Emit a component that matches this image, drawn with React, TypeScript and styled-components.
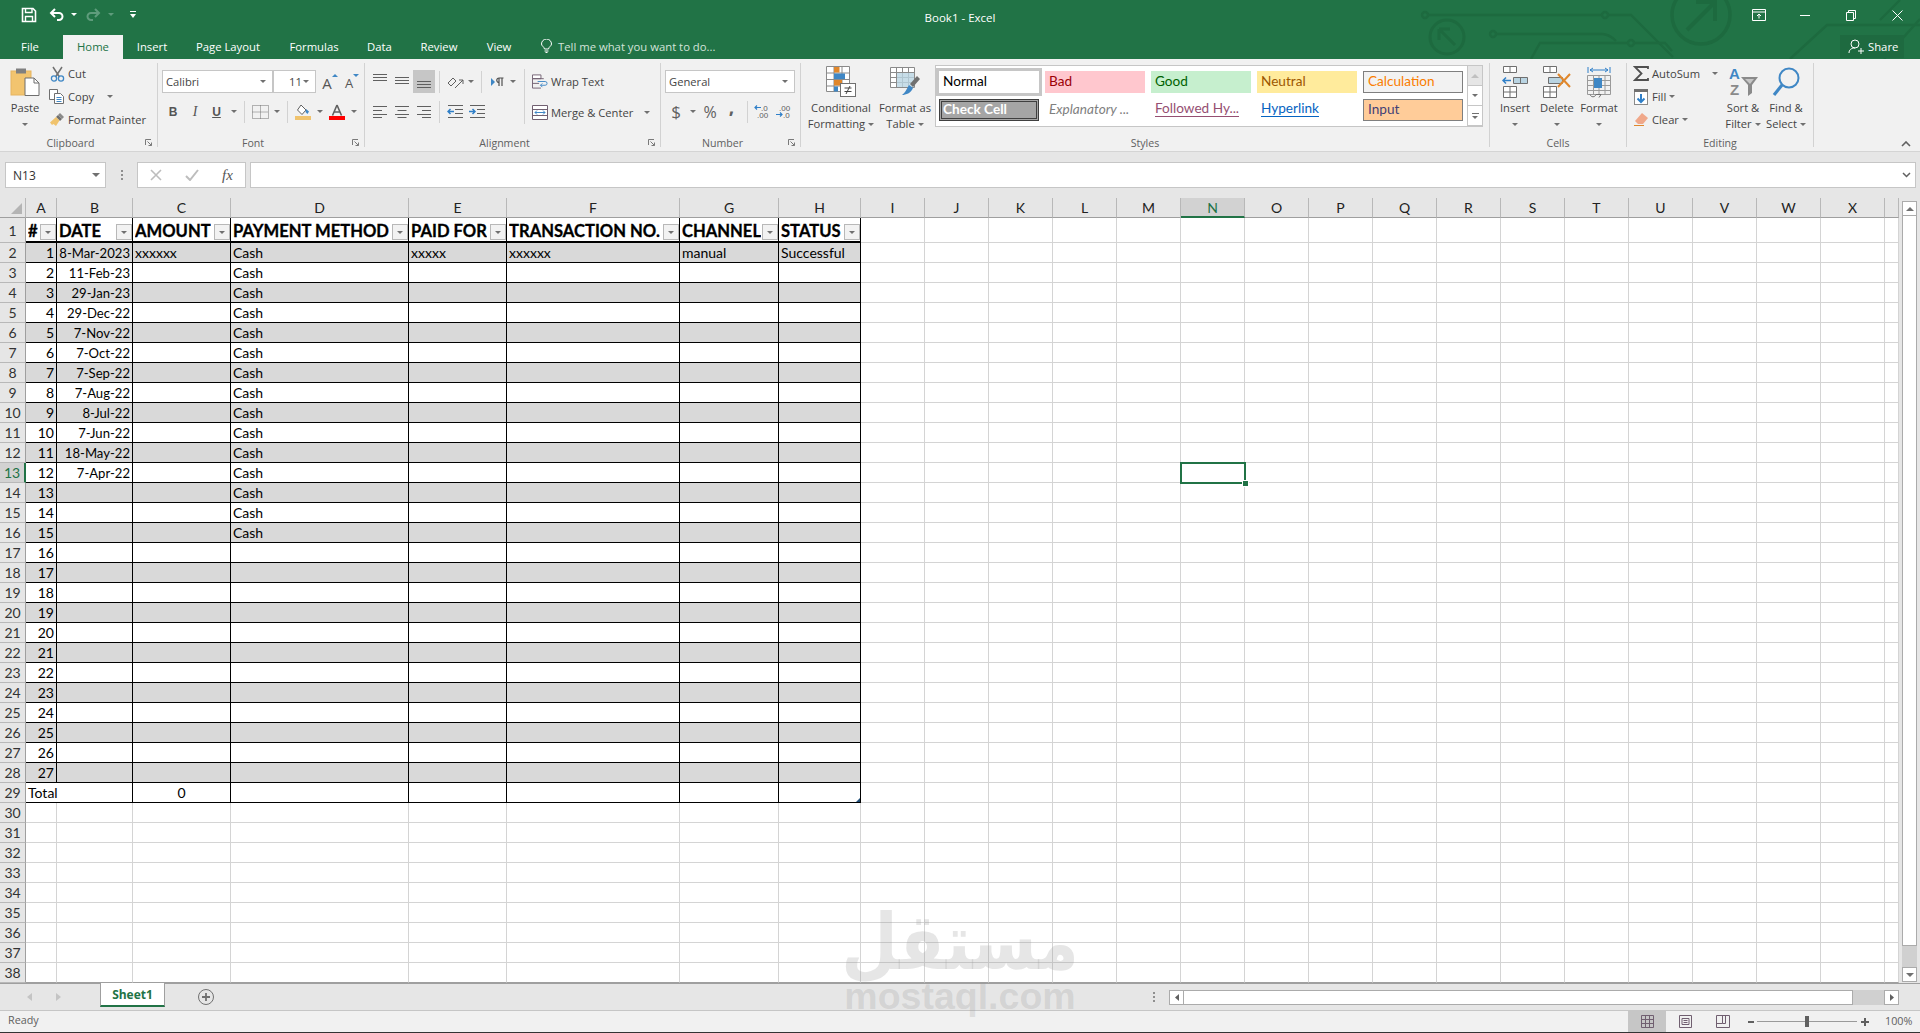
import React from "react";
import styled, { createGlobalStyle } from "styled-components";

const UI = `"Open Sans", "Liberation Sans", sans-serif`;
const SHEET = `Lato, "Liberation Sans", sans-serif`;
const GREEN = "#217346";
const DARK = "#444444";
const GRID = "#d4d4d4";

const GlobalStyle = createGlobalStyle`
  html, body {
    margin: 0;
    padding: 0;
    background: #e6e6e6;
    overflow: hidden;
  }
  * {
    box-sizing: border-box;
  }
`;

const COL_WIDTHS = [26, 31, 76, 98, 178, 98, 173, 99, 82, ...Array(16).fill(64), 14];
const LETTERS = "ABCDEFGHIJKLMNOPQRSTUVWX".split("");
const GRID_TEMPLATE = COL_WIDTHS.map((w) => `${w}px`).join(" ");
const DATES = ["8-Mar-2023", "11-Feb-23", "29-Jan-23", "29-Dec-22", "7-Nov-22", "7-Oct-22", "7-Sep-22", "7-Aug-22", "8-Jul-22", "7-Jun-22", "18-May-22", "7-Apr-22"];
const HEADERS = ["#", "DATE", "AMOUNT", "PAYMENT METHOD", "PAID FOR", "TRANSACTION NO.", "CHANNEL", "STATUS"];
const ROW_TWO: Record<number, string> = { 2: "xxxxxx", 4: "xxxxx", 5: "xxxxxx", 6: "manual", 7: "Successful" };

// ----- generic little bits -----

const Slot = styled.span<{ $w?: number; $ml?: number; $on?: boolean }>`
  display: flex;
  align-items: center;
  justify-content: center;
  flex: none;
  height: 23px;
  width: ${(p) => (p.$w ? `${p.$w}px` : "auto")};
  margin-left: ${(p) => p.$ml || 0}px;
  background: ${(p) => (p.$on ? "#c6c6c6" : "transparent")};
`;

const Caret = styled.span<{ $color?: string }>`
  display: inline-block;
  flex: none;
  width: 0;
  height: 0;
  border-left: 3px solid transparent;
  border-right: 3px solid transparent;
  border-top: 3px solid ${(p) => p.$color || "#707070"};
`;

const BigCaret = styled(Caret)`
  border-width: 4px 4px 0;
`;

const Divider = styled.span<{ $tall?: boolean; $ml?: number; $mr?: number }>`
  display: block;
  flex: none;
  width: 1px;
  height: ${(p) => (p.$tall ? 55 : 22)}px;
  margin: ${(p) => (p.$tall ? 6 : 1)}px ${(p) => p.$mr ?? 4}px 0 ${(p) => p.$ml ?? 4}px;
  background: #d2d2d2;
`;

const Grip = styled.span<{ $pushed?: boolean }>`
  display: flex;
  flex-direction: column;
  gap: 2px;
  flex: none;
  margin-left: ${(p) => (p.$pushed ? "auto" : "0")};
  i {
    display: block;
    width: 2px;
    height: 2px;
    background: #8f8f8f;
  }
`;

// ----- title bar -----

const TitleBar = styled.header`
  position: relative;
  height: 59px;
  background: ${GREEN};
  color: #fff;
  font-family: ${UI};
  overflow: hidden;
`;

const Circuit = styled.svg`
  position: absolute;
  left: 1400px;
  top: 0;
  pointer-events: none;
`;

const TopRow = styled.div`
  position: relative;
  display: grid;
  grid-template-columns: 1fr auto 1fr;
  align-items: center;
  height: 35px;
`;

const Qat = styled.div`
  display: flex;
  align-items: center;
  padding: 0 0 6px 14px;
`;

const WindowTitle = styled.div`
  font-size: 11.5px;
`;

const WindowButtons = styled.div`
  display: flex;
  justify-content: flex-end;
  align-items: center;
  padding-bottom: 5px;
`;

const WindowButton = styled.span`
  display: flex;
  justify-content: center;
  width: 46px;
`;

const TabRow = styled.nav`
  position: relative;
  display: flex;
  align-items: stretch;
  height: 24px;
  font-size: 11.3px;
`;

const Tab = styled.span<{ $w: number; $active?: boolean }>`
  display: flex;
  align-items: center;
  justify-content: center;
  width: ${(p) => p.$w}px;
  padding-bottom: 2px;
  background: ${(p) => (p.$active ? "#f1f1f1" : "transparent")};
  color: ${(p) => (p.$active ? GREEN : "#fff")};
`;

const FileTab = styled(Tab)`
  padding-right: 3px;
`;

const TellMe = styled.span`
  display: flex;
  align-items: center;
  gap: 6px;
  margin-left: 15px;
  padding-bottom: 2px;
  color: #d3e3da;
`;

const ShareBox = styled.span`
  display: flex;
  align-items: center;
  gap: 4px;
  width: 64px;
  height: 23px;
  margin-left: auto;
  margin-right: 16px;
  padding-left: 8px;
  background: #1e6a40;
`;

// ----- ribbon -----

const Ribbon = styled.section`
  display: flex;
  height: 93px;
  padding-top: 4px;
  background: #f1f1f1;
  border-bottom: 1px solid #d4d4d4;
  color: ${DARK};
  font-family: ${UI};
  font-size: 11.2px;
`;

const Group = styled.div<{ $w: number }>`
  display: flex;
  flex-direction: column;
  flex: none;
  width: ${(p) => p.$w}px;
  height: 84px;
  border-right: 1px solid #d2d2d2;
`;

const GroupBody = styled.div<{ $pl?: number }>`
  display: flex;
  flex: 1;
  padding-left: ${(p) => p.$pl ?? 4}px;
`;

const GroupFoot = styled.div`
  display: flex;
  align-items: center;
  height: 13px;
  color: #606060;
  font-size: 10.6px;
`;

const GroupLabel = styled.span`
  flex: 1;
  margin-top: 6px;
  text-align: center;
  line-height: 13px;
`;

const Launcher = styled.svg`
  flex: none;
  width: 7px;
  height: 7px;
  margin: 4px 5px 0 4px;
`;

const BigButton = styled.div<{ $w: number }>`
  display: flex;
  flex-direction: column;
  align-items: center;
  flex: none;
  width: ${(p) => p.$w}px;
  line-height: 16px;
  white-space: nowrap;
`;

const BigIcon = styled.div`
  display: flex;
  align-items: center;
  justify-content: center;
  height: 37px;
`;

const BigCaretLine = styled.div`
  display: flex;
  align-items: center;
  justify-content: center;
  gap: 3px;
  height: 16px;
`;

const StackCol = styled.div<{ $w?: number; $ml?: number }>`
  display: flex;
  flex-direction: column;
  flex: none;
  width: ${(p) => (p.$w ? `${p.$w}px` : "auto")};
  margin-top: -1px;
  margin-left: ${(p) => p.$ml || 0}px;
`;

const AlignStack = styled.div`
  display: flex;
  flex-direction: column;
  flex: none;
  padding-top: 3px;
`;

const SmallButton = styled.div`
  display: flex;
  align-items: center;
  gap: 3px;
  height: 23px;
  white-space: nowrap;
`;

const WideButton = styled(SmallButton)`
  height: 31px;
`;

const SmallIcon = styled.span`
  display: flex;
  align-items: center;
  justify-content: center;
  flex: none;
  width: 16px;
`;

const TwoRows = styled.div`
  display: flex;
  flex-direction: column;
  gap: 7px;
  padding-top: 7px;
`;

const ToolRow = styled.div`
  display: flex;
  align-items: center;
  height: 23px;
`;

const Combo = styled.div<{ $w: number; $ml?: number }>`
  display: flex;
  align-items: center;
  justify-content: space-between;
  flex: none;
  width: ${(p) => p.$w}px;
  height: 23px;
  margin-left: ${(p) => (p.$ml ? `${p.$ml}px` : "0")};
  padding: 0 6px 0 3px;
  background: #fff;
  border: 1px solid #c6c6c6;
`;

const ComboValue = styled.span`
  margin-left: 12px;
`;

const FontLetter = styled.span<{ $serif?: boolean; $u?: boolean; $size?: number }>`
  position: relative;
  font-family: ${(p) => (p.$serif ? `"Liberation Serif", serif` : `"Liberation Sans", sans-serif`)};
  font-size: ${(p) => p.$size || 12}px;
  font-weight: ${(p) => (p.$serif ? 400 : 700)};
  font-style: ${(p) => (p.$serif ? "italic" : "normal")};
  text-decoration: ${(p) => (p.$u ? "underline" : "none")};
  color: #555;
`;

const SizeLetter = styled.span<{ $down?: boolean }>`
  position: relative;
  font-size: ${(p) => (p.$down ? 13 : 15)}px;
  line-height: 18px;
  color: #555;
  padding-top: 2px;
  &::after {
    content: "";
    position: absolute;
    right: -6px;
    top: 2px;
    border-left: 3px solid transparent;
    border-right: 3px solid transparent;
    ${(p) => (p.$down ? "border-top" : "border-bottom")}: 3px solid #3f87c5;
  }
`;

const NumberSign = styled.span<{ $size?: number; $lift?: number; $bold?: boolean }>`
  font-size: ${(p) => p.$size || 15}px;
  font-weight: ${(p) => (p.$bold ? 800 : 400)};
  padding-bottom: ${(p) => p.$lift || 0}px;
  color: #606060;
`;

// ----- style gallery -----

const Gallery = styled.div`
  display: flex;
  flex: none;
  width: 548px;
  height: 62px;
  margin: 2px 0 0 2px;
  background: #fff;
  border: 1px solid #c6c6c6;
`;

const GalleryGrid = styled.div`
  display: grid;
  grid-template-columns: repeat(5, 100px);
  grid-auto-rows: 22px;
  gap: 6px;
  padding: 5px 0 0 3px;
  font-family: ${SHEET};
  font-size: 13.6px;
  color: #000;
`;

const StyleCell = styled.div<{ $bg?: string; $fg?: string; $border?: string; $italic?: boolean; $link?: boolean; $ring?: boolean; $double?: boolean }>`
  display: flex;
  align-items: center;
  padding: 0 0 2px 4px;
  background: ${(p) => p.$bg || "#fff"};
  color: ${(p) => p.$fg || "#000"};
  border: ${(p) => (p.$border ? `1px solid ${p.$border}` : "none")};
  font-style: ${(p) => (p.$italic ? "italic" : "normal")};
  font-weight: ${(p) => (p.$double ? 700 : 400)};
  outline: ${(p) => (p.$ring ? "3px solid #c6c6c6" : p.$double ? "1px solid #3f3f3f" : "none")};
  outline-offset: ${(p) => (p.$double ? "-1px" : "0")};
  box-shadow: ${(p) => (p.$double ? "inset 0 0 0 2px #a5a5a5, inset 0 0 0 3px #3f3f3f" : "none")};
  span {
    border-bottom: ${(p) => (p.$link ? `1px solid ${p.$fg}` : "none")};
    line-height: 15px;
  }
`;

const GalleryScroll = styled.div`
  display: flex;
  flex-direction: column;
  flex: none;
  width: 15px;
  margin-left: auto;
`;

const GalleryArrow = styled.span<{ $h: number; $off?: boolean }>`
  display: flex;
  flex-direction: column;
  align-items: center;
  justify-content: center;
  gap: 2px;
  height: ${(p) => p.$h}px;
  background: ${(p) => (p.$off ? "#e6e6e6" : "#fff")};
  border-left: 1px solid #c6c6c6;
  border-bottom: 1px solid #c6c6c6;
  i {
    display: block;
    width: 7px;
    height: 1px;
    background: #707070;
  }
`;

const ArrowUp = styled.span<{ $color?: string }>`
  width: 0;
  height: 0;
  border-left: 4px solid transparent;
  border-right: 4px solid transparent;
  border-bottom: 4px solid ${(p) => p.$color || "#707070"};
`;

const Collapse = styled.svg`
  align-self: flex-start;
  margin: 78px 0 0 87px;
`;

// ----- formula bar -----

const FormulaRow = styled.section`
  display: flex;
  height: 46px;
  padding: 10px 4px 10px 5px;
  background: #e6e6e6;
  font-family: ${UI};
`;

const NameBox = styled.div`
  display: flex;
  align-items: center;
  justify-content: space-between;
  width: 101px;
  padding: 0 5px 0 7px;
  background: #fff;
  border: 1px solid #c6c6c6;
  color: #333;
  font-size: 12px;
`;

const FormulaGrip = styled.div`
  display: flex;
  align-items: center;
  justify-content: center;
  width: 31px;
`;

const FormulaButtons = styled.div`
  display: flex;
  align-items: center;
  width: 109px;
  padding-left: 12px;
  background: #fff;
  border: 1px solid #c6c6c6;
`;

const CheckMark = styled.svg`
  margin-left: 23px;
`;

const FxLabel = styled.span`
  margin-left: 23px;
  font-family: "Liberation Serif", serif;
  font-style: italic;
  font-size: 15px;
  color: #555;
`;

const FormulaInput = styled.div`
  display: flex;
  align-items: center;
  justify-content: flex-end;
  flex: 1;
  margin-left: 4px;
  padding-right: 4px;
  background: #fff;
  border: 1px solid #c6c6c6;
`;

// ----- sheet -----

const SheetArea = styled.section`
  display: flex;
  height: 785px;
  background: #e6e6e6;
  font-family: ${SHEET};
  font-size: 14px;
`;

const SheetGrid = styled.div`
  flex: none;
  width: 1899px;
  background: #fff;
`;

const Row = styled.div<{ $h: number }>`
  display: grid;
  grid-template-columns: ${GRID_TEMPLATE};
  height: ${(p) => p.$h}px;
`;

const Corner = styled.div`
  display: flex;
  align-items: flex-end;
  justify-content: flex-end;
  padding: 0 3px 3px 0;
  background: #e6e6e6;
  border-right: 1px solid #b8b8b8;
  border-bottom: 1px solid #9f9f9f;
`;

const ColHead = styled.div<{ $on?: boolean }>`
  display: flex;
  align-items: center;
  justify-content: center;
  background: ${(p) => (p.$on ? "#d2d2d2" : "#e6e6e6")};
  color: ${(p) => (p.$on ? GREEN : "#222")};
  border-right: 1px solid #b8b8b8;
  border-bottom: ${(p) => (p.$on ? `2px solid ${GREEN}` : "1px solid #9f9f9f")};
`;

const RowHead = styled.div<{ $on?: boolean }>`
  display: flex;
  align-items: center;
  justify-content: center;
  background: ${(p) => (p.$on ? "#d2d2d2" : "#e6e6e6")};
  color: ${(p) => (p.$on ? GREEN : "#333")};
  border-right: ${(p) => (p.$on ? `2px solid ${GREEN}` : "1px solid #9f9f9f")};
  border-bottom: 1px solid #b8b8b8;
`;

const Cell = styled.div<{ $table?: boolean; $fill?: boolean; $align?: string; $span?: number; $end?: boolean; $num?: boolean }>`
  position: relative;
  display: flex;
  align-items: center;
  justify-content: ${(p) => p.$align || "flex-start"};
  grid-column: span ${(p) => p.$span || 1};
  padding: 0 2px;
  overflow: hidden;
  white-space: nowrap;
  font-size: ${(p) => (p.$num ? 13.1 : 14)}px;
  background: ${(p) => (p.$fill ? "#d9d9d9" : "#fff")};
  color: #000;
  border-right: 1px solid ${(p) => (p.$table ? "#000" : GRID)};
  border-bottom: 1px solid ${(p) => (p.$table ? "#000" : p.$end ? "#9f9f9f" : GRID)};
`;

const HeaderCell = styled(Cell)`
  padding-top: 3px;
  font-size: 16.6px;
  font-weight: 700;
  -webkit-text-stroke: 0.3px #000;
  border-bottom: 2px solid #000;
  overflow: visible;
`;

const HeaderText = styled.span`
  overflow: hidden;
  line-height: 20px;
`;

const FilterButton = styled.span`
  position: absolute;
  right: 0;
  bottom: 1px;
  display: flex;
  align-items: center;
  justify-content: center;
  width: 16px;
  height: 16px;
  background: #f2f2f2;
  border: 1px solid #b8b8b8;
`;

const Selected = styled.span`
  position: absolute;
  left: -1px;
  top: -1px;
  z-index: 2;
  width: 66px;
  height: 22px;
  border: 2px solid ${GREEN};
  &::after {
    content: "";
    position: absolute;
    right: -4px;
    bottom: -4px;
    width: 5px;
    height: 5px;
    background: ${GREEN};
    outline: 1px solid #fff;
  }
`;

const SelectedHolder = styled(Cell)`
  overflow: visible;
`;

const ResizeMark = styled.span`
  position: absolute;
  right: 0;
  bottom: 0;
  width: 0;
  height: 0;
  border-left: 4px solid transparent;
  border-bottom: 4px solid #1f4e79;
`;

const VScroll = styled.div`
  display: flex;
  flex-direction: column;
  flex: none;
  width: 15px;
  height: 784px;
  margin-left: 3px;
  padding-top: 3px;
`;

const ScrollButton = styled.span<{ $w?: number }>`
  display: flex;
  align-items: center;
  justify-content: center;
  flex: none;
  width: ${(p) => (p.$w ? `${p.$w}px` : "auto")};
  height: 15px;
  background: #fff;
  border: 1px solid #ababab;
`;

const ScrollThumb = styled.span`
  display: block;
  flex: 1;
  background: #fff;
  border: 1px solid #ababab;
  border-top: none;
`;

const ScrollTrack = styled.span<{ $size: number; $horizontal?: boolean }>`
  display: block;
  flex: none;
  ${(p) => (p.$horizontal ? "width" : "height")}: ${(p) => p.$size}px;
  background: #d0d0d0;
`;

// ----- sheet tabs and status -----

const TabsBar = styled.section`
  display: flex;
  align-items: center;
  height: 28px;
  background: #e6e6e6;
  border-top: 1px solid #9f9f9f;
  border-bottom: 1px solid #c6c6c6;
  font-family: ${UI};
`;

const SheetNav = styled.span<{ $w: number; $ml?: number }>`
  display: flex;
  justify-content: center;
  width: ${(p) => p.$w}px;
  margin-left: ${(p) => p.$ml || 0}px;
`;

const SheetTab = styled.span`
  display: flex;
  align-items: center;
  justify-content: center;
  align-self: flex-start;
  width: 65px;
  height: 24px;
  margin: -1px 0 0 28px;
  padding-top: 1px;
  background: #fff;
  color: ${GREEN};
  font-size: 12px;
  font-weight: 700;
  border-left: 1px solid #9f9f9f;
  border-right: 1px solid #9f9f9f;
  border-bottom: 2px solid ${GREEN};
`;

const AddSheet = styled.svg`
  margin-left: 33px;
`;

const HScroll = styled.div`
  display: flex;
  flex: none;
  width: 730px;
  height: 15px;
  margin: 0 21px 0 14px;
`;

const HThumb = styled.span`
  display: block;
  flex: 1;
  background: #fff;
  border: 1px solid #ababab;
  border-left: none;
`;

const StatusBar = styled.footer`
  display: flex;
  align-items: center;
  height: 22px;
  padding-left: 8px;
  background: #f1f1f1;
  border-bottom: 1px solid #333;
  color: #606060;
  font-family: ${UI};
  font-size: 10.8px;
`;

const ReadyText = styled.span`
  padding-bottom: 5px;
`;

const ViewButton = styled.span<{ $on?: boolean; $first?: boolean }>`
  display: flex;
  align-items: center;
  justify-content: center;
  align-self: stretch;
  width: 38px;
  padding-bottom: 1px;
  margin-left: ${(p) => (p.$first ? "auto" : "0")};
  background: ${(p) => (p.$on ? "#c6c6c6" : "transparent")};
`;

const ZoomSlider = styled.span`
  position: relative;
  display: block;
  width: 100px;
  height: 1px;
  margin-right: 3px;
  background: #9a9a9a;
  i {
    position: absolute;
    left: 48px;
    top: -5px;
    width: 4px;
    height: 11px;
    background: #606060;
  }
`;

const ZoomPct = styled.span`
  width: 50px;
  padding-left: 15px;
  padding-bottom: 3px;
`;

const Watermark = styled.div`
  position: absolute;
  left: 830px;
  top: 910px;
  width: 260px;
  display: flex;
  flex-direction: column;
  align-items: center;
  color: rgba(150, 150, 150, 0.24);
  pointer-events: none;
  z-index: 5;
`;

const WatermarkArabic = styled.span`
  font-family: "DejaVu Sans", sans-serif;
  font-weight: 700;
  font-size: 65px;
  line-height: 66px;
  transform: scaleY(1.2);
`;

const WatermarkLatin = styled.span`
  font-family: "Liberation Sans", sans-serif;
  font-weight: 700;
  font-size: 37.5px;
  line-height: 26px;
  margin-top: 7px;
`;

// ----- icons -----

const SaveIcon = () => (
  <svg width="16" height="16" viewBox="0 0 16 16" fill="none" stroke="#fff" strokeWidth="1.6">
    <path d="M1.5 1.5h10.500l2.500 2.500v10.500h-13z" />
    <path d="M4.500 1.500v4h6.500v-4M4.500 14.500v-5h7v5" strokeWidth="1.4" />
  </svg>
);

const UndoIcon = ({ color = "#fff" }: { color?: string }) => (
  <svg width="16" height="14" viewBox="0 0 16 14" fill="none" stroke={color} strokeWidth="2">
    <path d="M6 1L2 5l4 4M2 5h8a3.500 3.500 0 0 1 0 7H8" />
  </svg>
);

const RedoIcon = ({ color }: { color: string }) => (
  <svg width="16" height="14" viewBox="0 0 16 14" fill="none" stroke={color} strokeWidth="2">
    <path d="M10 1l4 4-4 4M14 5H6a3.500 3.500 0 0 0 0 7h2" />
  </svg>
);

const PasteIcon = () => (
  <svg width="30" height="29" viewBox="0 0 30 29">
    <rect x="1" y="4" width="20" height="24" fill="#f2c46f" stroke="#e6b461" />
    <rect x="6" y="1.500" width="10" height="5" fill="#808080" />
    <path d="M15 11h9l5 5v12.500H15z" fill="#fff" stroke="#6f6f6f" />
    <path d="M24 11v5h5" fill="none" stroke="#6f6f6f" />
  </svg>
);

const CutIcon = () => (
  <svg width="15" height="16" viewBox="0 0 15 16" fill="none">
    <path d="M3 1l6.500 10M12 1L5.500 11" stroke="#707070" strokeWidth="1.500" />
    <circle cx="4" cy="12.500" r="2.600" stroke="#3f87c5" strokeWidth="1.300" />
    <circle cx="11" cy="12.500" r="2.600" stroke="#3f87c5" strokeWidth="1.300" />
  </svg>
);

const CopyIcon = () => (
  <svg width="16" height="15" viewBox="0 0 16 15" fill="#fff" stroke="#6f6f6f">
    <path d="M.5.5h8v10h-8z" />
    <path d="M5.500 4.500h6l3 3v7h-9z" />
    <path d="M7.500 8.500h5M7.500 10.500h5M7.500 12.500h5" stroke="#3f87c5" />
  </svg>
);

const BrushIcon = () => (
  <svg width="16" height="15" viewBox="0 0 16 15">
    <path d="M9 3l4 4-2 2-4-4z" fill="#6f6f6f" />
    <path d="M11 1l4 4-2 2-4-4z" fill="#8a8a8a" />
    <path d="M7 5l3.500 3.500L7 14 4.500 12 3 13 1 10.500z" fill="#f0c36d" />
  </svg>
);

const AlignVLines = styled.svg<{ $y: number }>`
  margin-top: ${(p) => p.$y}px;
`;

const AlignV = ({ y }: { y: number }) => (
  <AlignVLines $y={y} width="14" height="8" viewBox="0 0 14 8" stroke="#606060">
    <path d="M0 .5h14M0 3.500h14M0 6.500h14" />
  </AlignVLines>
);

const AlignH = ({ kind }: { kind: "l" | "c" | "r" }) => {
  const short = kind === "l" ? "M0 4.500h9" : kind === "c" ? "M2.500 4.500h9" : "M5 4.500h9";
  const shortB = kind === "l" ? "M0 11.500h9" : kind === "c" ? "M2.500 11.500h9" : "M5 11.500h9";
  return (
    <svg width="14" height="12" viewBox="0 0 14 12" stroke="#606060">
      <path d={`M0 .5h14M0 8.500h14 ${short} ${shortB}`} />
    </svg>
  );
};

const BorderIcon = () => (
  <svg width="17" height="14" viewBox="0 0 17 14" fill="none" stroke="#707070" strokeDasharray="1 1">
    <path d="M.5.5h16v13H.5zM8.500 .5v13M.5 7h16" />
  </svg>
);

const FillIcon = () => (
  <svg width="16" height="16" viewBox="0 0 16 16">
    <path d="M6 1l5 5-4 4.500L2.500 6z" fill="#fff" stroke="#606060" />
    <path d="M11 5l3 2.500-1.500 2.500L10.500 8z" fill="#3f87c5" />
    <rect x="0" y="12" width="16" height="4" fill="#f0c36d" />
  </svg>
);

const FontColorIcon = () => (
  <svg width="16" height="16" viewBox="0 0 16 16">
    <path d="M8 1L3.500 11.500M8 1l4.500 10.500M5 8h6" stroke="#606060" strokeWidth="1.600" fill="none" />
    <rect x="0" y="12" width="16" height="4" fill="#ff0000" />
  </svg>
);

const OrientIcon = () => (
  <svg width="17" height="15" viewBox="0 0 17 15" fill="none" stroke="#606060">
    <path d="M1 9l5-5 3 3-5 5zM1 9l3 3" />
    <path d="M8 14l8-8M16 6v4M16 6h-4" stroke="#606060" />
  </svg>
);

const ParaIcon = () => (
  <svg width="13" height="10" viewBox="0 0 13 10">
    <path d="M0 1l4 4-4 4z" fill="#3f87c5" />
    <path d="M7.500 1h5M8 1v8M11 1v8M8 1a2 2 0 0 0 0 4.500" fill="none" stroke="#505050" strokeWidth="1.200" />
  </svg>
);

const IndentIcon = ({ out = false }: { out?: boolean }) => (
  <svg width="16" height="13" viewBox="0 0 16 13" fill="none" stroke="#606060">
    <path d="M1 .5h15M8 4.500h8M8 8.500h8M1 12.500h15" />
    <path d={out ? "M7 6.500H1M3.500 4L1 6.500 3.500 9" : "M0 6.500h6M3.500 4L6 6.500 3.500 9"} stroke="#2f7fc8" strokeWidth="1.500" />
  </svg>
);

const WrapIcon = () => (
  <svg width="17" height="15" viewBox="0 0 17 15" fill="#fff" stroke="#705f70">
    <path d="M.5.5h9v4h-9zM.5 4.500h12M.5 9.500h7M.5 14.500h9M.5 4.500v10" />
    <path d="M6 7.500h8a2 2 0 0 1 0 4H9M11 9.500l-2 2 2 2" fill="none" stroke="#3f87c5" />
  </svg>
);

const MergeIcon = () => (
  <svg width="16" height="15" viewBox="0 0 16 15" fill="#fff" stroke="#705f70">
    <path d="M.5.5h15v14H.5zM.5 4.500h15M.5 10.500h15" />
    <path d="M3 7.500h10M5 5.500l-2 2 2 2M11 5.500l2 2-2 2" fill="none" stroke="#3f87c5" />
  </svg>
);

const DecimalIcon = ({ more = false }: { more?: boolean }) => (
  <svg width="17" height="15" viewBox="0 0 17 15" fill="#606060" fontFamily="Liberation Sans" fontSize="8">
    <text x={more ? 3 : 7} y="6.500">{more ? ".00" : ".0"}</text>
    <text x={more ? 7 : 3} y="14">{more ? ".0" : ".00"}</text>
    <path
      d={more ? "M0 10.500h6M4 8.500l2 2-2 2" : "M7 3.500H1M3 1.500l-2 2 2 2"}
      fill="none"
      stroke="#2f7fc8"
      strokeWidth="1.200"
    />
  </svg>
);

const CondIcon = () => (
  <svg width="30" height="31" viewBox="0 0 30 31">
    <path d="M.5.5h23v25H.5zM8 .5v25M16 .5v25M.5 7h23M.5 13.500h23M.5 20h23" fill="#fff" stroke="#8a8a8a" />
    <rect x="8" y="1" width="5.500" height="5.500" fill="#e0872c" />
    <rect x="8" y="7.500" width="11" height="5.500" fill="#3f87c5" />
    <rect x="8" y="14" width="8" height="5.500" fill="#e0872c" />
    <rect x="8" y="20.500" width="4" height="5" fill="#3f87c5" />
    <rect x="14.500" y="17.500" width="15" height="13" fill="#fff" stroke="#707070" />
    <path d="M18.500 22h7M18.500 25.500h7M24 20l-4 8" stroke="#444" fill="none" />
  </svg>
);

const TableIcon = () => (
  <svg width="30" height="30" viewBox="0 0 30 30">
    <path d="M.5.5h24v20H.5zM6.500 .5v20M12.500 .5v20M18.500 .5v20M.5 5.500h24M.5 10.500h24M.5 15.500h24" fill="#fff" stroke="#8a8a8a" />
    <rect x="7" y="6" width="17" height="14" fill="#b9d4e2" opacity=".8" />
    <path d="M27 9l3 3-7 8-3-3z" fill="#707070" />
    <path d="M19 18l4 3c-2 5-7 7-11 7 3-2 4-5 7-10z" fill="#3f87c5" />
  </svg>
);

const InsertIcon = () => (
  <svg width="27" height="32" viewBox="0 0 27 32" fill="#fff" stroke="#6f6f6f">
    <path d="M1.500 .5h13v6h-13zM8 .5v6" />
    <path d="M11.500 11.500h14v6h-14z" fill="#b9d4e2" />
    <path d="M18.500 11.500v6" />
    <path d="M9 14.500H1M4 11.500l-3 3 3 3" fill="none" stroke="#2f7fc8" strokeWidth="1.500" />
    <path d="M1.500 20.500h13v11h-13zM8 20.500v11M1.500 26h13" />
  </svg>
);

const DeleteIcon = () => (
  <svg width="30" height="32" viewBox="0 0 30 32" fill="#fff" stroke="#6f6f6f">
    <path d="M1.500 .5h13v6h-13zM8 .5v6" />
    <path d="M6.500 11.500h14v6h-14z" fill="#b9d4e2" />
    <path d="M1.500 20.500h13v11h-13zM8 20.500v11M1.500 26h13" />
    <path d="M16 8l12 13M28 8L16 21" stroke="#e0872c" strokeWidth="2" fill="none" />
  </svg>
);

const FormatIcon = () => (
  <svg width="24" height="33" viewBox="0 0 24 33" fill="none" stroke="#6f6f6f">
    <path d="M1 2v6M23 2v6M3 5h18M3 5l3-2M3 5l3 2M21 5l-3-2M21 5l-3 2" stroke="#2f7fc8" />
    <path d="M.5 10.500h23v19H.5zM6.500 10.500v19M12 10.500v19M18 10.500v19M.5 15.500h23M.5 20.500h23M.5 25.500h23" stroke="#9a9a9a" />
    <rect x="7" y="13" width="8" height="10" fill="#3f87c5" stroke="none" />
    <path d="M3 29.500c1 3 5 3 6 0h5l-2 3" stroke="#6f6f6f" />
  </svg>
);

const SigmaIcon = () => (
  <svg width="16" height="15" viewBox="0 0 16 15" fill="none" stroke="#505050" strokeWidth="1.800">
    <path d="M15 3V1H2l6.500 6.500L2 14h13v-2" />
  </svg>
);

const FillDownIcon = () => (
  <svg width="14" height="16" viewBox="0 0 14 16">
    <rect x=".5" y=".5" width="13" height="15" fill="#fff" stroke="#8a8a8a" />
    <rect x="0" y="0" width="14" height="3" fill="#707070" />
    <path d="M7 5v8M3.500 9.500L7 13l3.500-3.500" fill="none" stroke="#2f7fc8" strokeWidth="2" />
  </svg>
);

const EraserIcon = () => (
  <svg width="14" height="13" viewBox="0 0 14 13">
    <path d="M8 0l6 5-5 6H4L1 8z" fill="#f0a88a" />
    <path d="M0 12.500h10" stroke="#e0872c" />
  </svg>
);

const SortIcon = () => (
  <svg width="29" height="31" viewBox="0 0 29 31" fontFamily="Liberation Sans" fontWeight="700" fontSize="15">
    <text x="0" y="13" fill="#3f87c5">A</text>
    <text x="1" y="29" fill="#8a8a8a">Z</text>
    <path d="M12 11h17l-6 8v8l-4 3V19z" fill="#8a8a8a" />
    <path d="M16 13h9l-4 5z" fill="#c6c6c6" />
  </svg>
);

const FindIcon = () => (
  <svg width="28" height="30" viewBox="0 0 28 30" fill="none">
    <circle cx="17" cy="11" r="9.500" stroke="#3f87c5" strokeWidth="2" />
    <path d="M10 18L2 28" stroke="#3f87c5" strokeWidth="3.200" />
  </svg>
);

const LauncherIcon = () => (
  <Launcher viewBox="0 0 7 7" fill="none" stroke="#7a7a7a">
    <path d="M.5 6V.5H6" />
    <path d="M2.500 2.500l4 4M6.500 3.500v3h-3" />
  </Launcher>
);

const Foot = ({ label, launcher = false }: { label: string; launcher?: boolean }) => (
  <GroupFoot>
    <GroupLabel>{label}</GroupLabel>
    {launcher && <LauncherIcon />}
  </GroupFoot>
);

const StyleGallery = () => (
  <Gallery>
    <GalleryGrid>
      <StyleCell $ring>Normal</StyleCell>
      <StyleCell $bg="#ffc7ce" $fg="#9c0006">Bad</StyleCell>
      <StyleCell $bg="#c6efce" $fg="#006100">Good</StyleCell>
      <StyleCell $bg="#ffeb9c" $fg="#9c5700">Neutral</StyleCell>
      <StyleCell $bg="#f2f2f2" $fg="#fa7d00" $border="#7f7f7f">Calculation</StyleCell>
      <StyleCell $bg="#a5a5a5" $fg="#fff" $double>Check Cell</StyleCell>
      <StyleCell $fg="#7f7f7f" $italic>Explanatory ...</StyleCell>
      <StyleCell $fg="#954f72" $link><span>Followed Hy...</span></StyleCell>
      <StyleCell $fg="#0563c1" $link><span>Hyperlink</span></StyleCell>
      <StyleCell $bg="#ffcc99" $fg="#3f3f76" $border="#7f7f7f">Input</StyleCell>
    </GalleryGrid>
    <GalleryScroll>
      <GalleryArrow $h={20} $off><ArrowUp $color="#c0c0c0" /></GalleryArrow>
      <GalleryArrow $h={20}><Caret /></GalleryArrow>
      <GalleryArrow $h={20}><i /><Caret /></GalleryArrow>
    </GalleryScroll>
  </Gallery>
);

const RibbonBar = () => (
  <Ribbon>
    <Group $w={158}>
      <GroupBody $pl={8}>
        <BigButton $w={34}>
          <BigIcon><PasteIcon /></BigIcon>
          <div>Paste</div>
          <BigCaretLine><Caret /></BigCaretLine>
        </BigButton>
        <StackCol $ml={7}>
          <SmallButton><SmallIcon><CutIcon /></SmallIcon>Cut</SmallButton>
          <SmallButton><SmallIcon><CopyIcon /></SmallIcon>Copy<Slot $w={18} $ml={4}><Caret /></Slot></SmallButton>
          <SmallButton><SmallIcon><BrushIcon /></SmallIcon>Format Painter</SmallButton>
        </StackCol>
      </GroupBody>
      <Foot label="Clipboard" launcher />
    </Group>

    <Group $w={207}>
      <GroupBody>
        <TwoRows>
          <ToolRow>
            <Combo $w={111}>Calibri<Caret /></Combo>
            <Combo $w={43}><ComboValue>11</ComboValue><Caret /></Combo>
            <Slot $w={22}><SizeLetter>A</SizeLetter></Slot>
            <Slot $w={22}><SizeLetter $down>A</SizeLetter></Slot>
          </ToolRow>
          <ToolRow>
            <Slot $w={22}><FontLetter>B</FontLetter></Slot>
            <Slot $w={22}><FontLetter $serif $size={14}>I</FontLetter></Slot>
            <Slot $w={21}><FontLetter $u>U</FontLetter></Slot>
            <Slot $w={13}><Caret /></Slot>
            <Divider />
            <Slot $w={23}><BorderIcon /></Slot>
            <Slot $w={10}><Caret /></Slot>
            <Divider $ml={5} $mr={3} />
            <Slot $w={24}><FillIcon /></Slot>
            <Slot $w={10}><Caret /></Slot>
            <Slot $w={24}><FontColorIcon /></Slot>
            <Slot $w={9}><Caret /></Slot>
          </ToolRow>
        </TwoRows>
      </GroupBody>
      <Foot label="Font" launcher />
    </Group>

    <Group $w={296}>
      <GroupBody>
        <TwoRows>
          <ToolRow>
            <Slot $w={22}><AlignV y={-8} /></Slot>
            <Slot $w={22}><AlignV y={-1} /></Slot>
            <Slot $w={22} $on><AlignV y={7} /></Slot>
            <Divider />
            <Slot $w={22}><OrientIcon /></Slot>
            <Slot $w={10}><Caret /></Slot>
            <Divider $ml={5} />
            <Slot $w={22}><ParaIcon /></Slot>
            <Slot $w={10}><Caret /></Slot>
          </ToolRow>
          <ToolRow>
            <Slot $w={22}><AlignH kind="l" /></Slot>
            <Slot $w={22}><AlignH kind="c" /></Slot>
            <Slot $w={22}><AlignH kind="r" /></Slot>
            <Divider />
            <Slot $w={22}><IndentIcon out /></Slot>
            <Slot $w={22}><IndentIcon /></Slot>
          </ToolRow>
        </TwoRows>
        <Divider $tall $ml={6} $mr={7} />
        <AlignStack>
          <WideButton><SmallIcon><WrapIcon /></SmallIcon>Wrap Text</WideButton>
          <WideButton><SmallIcon><MergeIcon /></SmallIcon>Merge &amp; Center<Slot $w={10} $ml={6}><Caret /></Slot></WideButton>
        </AlignStack>
      </GroupBody>
      <Foot label="Alignment" launcher />
    </Group>

    <Group $w={140}>
      <GroupBody>
        <TwoRows>
          <ToolRow><Combo $w={130}>General<Caret /></Combo></ToolRow>
          <ToolRow>
            <Slot $w={22}><NumberSign $size={17}>$</NumberSign></Slot>
            <Slot $w={11}><Caret /></Slot>
            <Slot $w={24}><NumberSign $size={16}>%</NumberSign></Slot>
            <Slot $w={19}><NumberSign $size={16} $lift={8} $bold>,</NumberSign></Slot>
            <Divider $ml={6} $mr={3} />
            <Slot $w={22}><DecimalIcon /></Slot>
            <Slot $w={22}><DecimalIcon more /></Slot>
          </ToolRow>
        </TwoRows>
      </GroupBody>
      <Foot label="Number" launcher />
    </Group>

    <Group $w={689}>
      <GroupBody>
        <BigButton $w={72}>
          <BigIcon><CondIcon /></BigIcon>
          <div>Conditional</div>
          <BigCaretLine>Formatting<Caret /></BigCaretLine>
        </BigButton>
        <BigButton $w={56}>
          <BigIcon><TableIcon /></BigIcon>
          <div>Format as</div>
          <BigCaretLine>Table<Caret /></BigCaretLine>
        </BigButton>
        <StyleGallery />
      </GroupBody>
      <Foot label="Styles" />
    </Group>

    <Group $w={137}>
      <GroupBody>
        <BigButton $w={42}>
          <BigIcon><InsertIcon /></BigIcon>
          <div>Insert</div>
          <BigCaretLine><Caret /></BigCaretLine>
        </BigButton>
        <BigButton $w={42}>
          <BigIcon><DeleteIcon /></BigIcon>
          <div>Delete</div>
          <BigCaretLine><Caret /></BigCaretLine>
        </BigButton>
        <BigButton $w={42}>
          <BigIcon><FormatIcon /></BigIcon>
          <div>Format</div>
          <BigCaretLine><Caret /></BigCaretLine>
        </BigButton>
      </GroupBody>
      <Foot label="Cells" />
    </Group>

    <Group $w={187}>
      <GroupBody $pl={6}>
        <StackCol $w={87}>
          <SmallButton><SmallIcon><SigmaIcon /></SmallIcon>AutoSum<Slot $w={10} $ml={7}><Caret /></Slot></SmallButton>
          <SmallButton><SmallIcon><FillDownIcon /></SmallIcon>Fill<Caret /></SmallButton>
          <SmallButton><SmallIcon><EraserIcon /></SmallIcon>Clear<Caret /></SmallButton>
        </StackCol>
        <BigButton $w={46}>
          <BigIcon><SortIcon /></BigIcon>
          <div>Sort &amp;</div>
          <BigCaretLine>Filter<Caret /></BigCaretLine>
        </BigButton>
        <BigButton $w={40}>
          <BigIcon><FindIcon /></BigIcon>
          <div>Find &amp;</div>
          <BigCaretLine>Select<Caret /></BigCaretLine>
        </BigButton>
      </GroupBody>
      <Foot label="Editing" />
    </Group>

    <Collapse width="10" height="6" viewBox="0 0 10 6" fill="none" stroke="#606060" strokeWidth="1.600">
      <path d="M1 5l4-4 4 4" />
    </Collapse>
  </Ribbon>
);

const Title = () => (
  <TitleBar>
    <Circuit width="520" height="59" viewBox="0 0 520 59" fill="none" stroke="#1d6a3f" strokeWidth="2.400">
      <circle cx="25" cy="15" r="3" />
      <path d="M28 15h174M208 15h23l42 42" />
      <circle cx="205" cy="15" r="3" />
      <circle cx="47" cy="37" r="17" strokeWidth="3" />
      <path d="M39 29l16 16M39 29v11M39 29h11" strokeWidth="3" />
      <circle cx="93" cy="34" r="3" />
      <path d="M96 34h106c6 0 10 3 14 7" />
      <path d="M131 59l9-16h88M234 43h31l7 8" />
      <circle cx="231" cy="43" r="3" />
      <circle cx="301" cy="15" r="29" strokeWidth="3.500" />
      <path d="M287 30l28-28M296 2h19v19" strokeWidth="4" />
      <path d="M390 59l37-34h93M484 59l36-40M500 0l-20 20" />
    </Circuit>
    <TopRow>
      <Qat>
        <Slot $w={30}><SaveIcon /></Slot>
        <Slot $w={26}><UndoIcon /></Slot>
        <Slot $w={7}><Caret $color="#fff" /></Slot>
        <Slot $w={28} $ml={2}><RedoIcon color="#5f9c7c" /></Slot>
        <Slot $w={7}><Caret $color="#5f9c7c" /></Slot>
        <Slot $w={18} $ml={10}>
          <svg width="6" height="7" viewBox="0 0 6 7" fill="#fff"><path d="M0 0h6v1H0zM0 3h6L3 7z" /></svg>
        </Slot>
      </Qat>
      <WindowTitle>Book1 - Excel</WindowTitle>
      <WindowButtons>
        <WindowButton>
          <svg width="14" height="12" viewBox="0 0 14 12" fill="none" stroke="#fff">
            <path d="M.5.5h13v11H.5zM.5 3h13M7 9.500V5M5 7l2-2 2 2" />
          </svg>
        </WindowButton>
        <WindowButton>
          <svg width="10" height="10" viewBox="0 0 10 10" stroke="#fff"><path d="M0 5.500h10" /></svg>
        </WindowButton>
        <WindowButton>
          <svg width="10" height="11" viewBox="0 0 10 11" fill="none" stroke="#fff">
            <path d="M.5 2.500h7v8h-7zM2.500 2.500v-2h7v8h-2" />
          </svg>
        </WindowButton>
        <WindowButton>
          <svg width="11" height="11" viewBox="0 0 11 11" stroke="#fff"><path d="M.5.5l10 10M10.500 .5l-10 10" /></svg>
        </WindowButton>
      </WindowButtons>
    </TopRow>
    <TabRow>
      <FileTab $w={63}>File</FileTab>
      <Tab $w={60} $active>Home</Tab>
      <Tab $w={58}>Insert</Tab>
      <Tab $w={94}>Page Layout</Tab>
      <Tab $w={78}>Formulas</Tab>
      <Tab $w={53}>Data</Tab>
      <Tab $w={66}>Review</Tab>
      <Tab $w={54}>View</Tab>
      <TellMe>
        <svg width="11" height="14" viewBox="0 0 11 14" fill="none" stroke="#fff">
          <path d="M3.500 10C3 7.500 .5 7 .5 5a5 5 0 0 1 10 0c0 2-2.500 2.500-3 5zM3.500 12h4M4.500 13.500h2" />
        </svg>
        Tell me what you want to do...
      </TellMe>
      <ShareBox>
        <svg width="16" height="15" viewBox="0 0 16 15" fill="none" stroke="#fff">
          <circle cx="7" cy="5" r="4" />
          <path d="M1 14c0-3 2-5 6-5M10 12h6M13 9v6" />
        </svg>
        Share
      </ShareBox>
    </TabRow>
  </TitleBar>
);

const FormulaBar = () => (
  <FormulaRow>
    <NameBox>N13<BigCaret /></NameBox>
    <FormulaGrip><Grip><i /><i /><i /></Grip></FormulaGrip>
    <FormulaButtons>
      <svg width="12" height="12" viewBox="0 0 12 12" stroke="#bdbdbd" strokeWidth="1.600"><path d="M1 1l10 10M11 1L1 11" /></svg>
      <CheckMark width="14" height="12" viewBox="0 0 14 12" fill="none" stroke="#bdbdbd" strokeWidth="2"><path d="M1 7l4 4 8-10" /></CheckMark>
      <FxLabel>fx</FxLabel>
    </FormulaButtons>
    <FormulaInput>
      <svg width="9" height="6" viewBox="0 0 9 6" fill="none" stroke="#606060" strokeWidth="1.500"><path d="M1 1l3.500 3.500L8 1" /></svg>
    </FormulaInput>
  </FormulaRow>
);

const DataRow = ({ r }: { r: number }) => {
  const inTable = r <= 29;
  const fill = inTable && r % 2 === 0;
  const cells: React.ReactNode[] = [];
  for (let c = 0; c < 25; c++) {
    const table = inTable && c < 8;
    const end = r === 38;
    let text: string | number | null = null;
    let align = "flex-start";
    let num = false;
    if (r === 29 && c === 1) continue;
    if (table && r <= 28) {
      if (c === 0) { text = r - 1; align = "flex-end"; }
      if (c === 1 && DATES[r - 2]) { text = DATES[r - 2]; align = "flex-end"; num = true; }
      if (c === 3 && r <= 16) text = "Cash";
      if (r === 2 && ROW_TWO[c]) text = ROW_TWO[c];
    }
    if (r === 29 && c === 0) text = "Total";
    if (r === 29 && c === 2) { text = 0; align = "center"; }
    if (r === 13 && c === 13) {
      cells.push(<SelectedHolder key={c}><Selected /></SelectedHolder>);
      continue;
    }
    cells.push(
      <Cell key={c} $table={table} $fill={fill && table} $align={align} $end={end} $num={num} $span={r === 29 && c === 0 ? 2 : 1}>
        {text}
        {r === 29 && c === 7 && <ResizeMark />}
      </Cell>
    );
  }
  return (
    <Row $h={20}>
      <RowHead $on={r === 13}>{r}</RowHead>
      {cells}
    </Row>
  );
};

const Sheet = () => (
  <SheetArea>
    <SheetGrid>
      <Row $h={20}>
        <Corner>
          <svg width="11" height="11" viewBox="0 0 11 11" fill="#b4b4b4"><path d="M11 0v11H0z" /></svg>
        </Corner>
        {LETTERS.map((l) => <ColHead key={l} $on={l === "N"}>{l}</ColHead>)}
        <ColHead />
      </Row>
      <Row $h={25}>
        <RowHead>1</RowHead>
        {COL_WIDTHS.slice(1).map((_, c) => (
          c < 8 ? (
            <HeaderCell key={c} $table>
              <HeaderText>{HEADERS[c]}</HeaderText>
              <FilterButton><Caret /></FilterButton>
            </HeaderCell>
          ) : <Cell key={c} />
        ))}
      </Row>
      {Array.from({ length: 37 }, (_, i) => <DataRow key={i} r={i + 2} />)}
    </SheetGrid>
    <VScroll>
      <ScrollButton><ArrowUp /></ScrollButton>
      <ScrollThumb />
      <ScrollTrack $size={21} />
      <ScrollButton><BigCaret /></ScrollButton>
    </VScroll>
  </SheetArea>
);

const Tabs = () => (
  <TabsBar>
    <SheetNav $w={30} $ml={14}>
      <svg width="5" height="8" viewBox="0 0 5 8" fill="#c4c4c4"><path d="M5 0v8L0 4z" /></svg>
    </SheetNav>
    <SheetNav $w={28}>
      <svg width="5" height="8" viewBox="0 0 5 8" fill="#c4c4c4"><path d="M0 0v8l5-4z" /></svg>
    </SheetNav>
    <SheetTab>Sheet1</SheetTab>
    <AddSheet width="16" height="16" viewBox="0 0 16 16" fill="none" stroke="#707070">
      <circle cx="8" cy="8" r="7.500" />
      <path d="M8 4v8M4 8h8" strokeWidth="1.800" />
    </AddSheet>
    <Grip $pushed><i /><i /><i /></Grip>
    <HScroll>
      <ScrollButton $w={15}>
        <svg width="4" height="7" viewBox="0 0 4 7" fill="#606060"><path d="M4 0v7L0 3.500z" /></svg>
      </ScrollButton>
      <HThumb />
      <ScrollTrack $size={31} $horizontal />
      <ScrollButton $w={15}>
        <svg width="4" height="7" viewBox="0 0 4 7" fill="#606060"><path d="M0 0v7l4-3.500z" /></svg>
      </ScrollButton>
    </HScroll>
  </TabsBar>
);

const Status = () => (
  <StatusBar>
    <ReadyText>Ready</ReadyText>
    <ViewButton $first $on>
      <svg width="13" height="13" viewBox="0 0 13 13" fill="none" stroke="#705f70">
        <path d="M.5.5h12v12H.5zM4.500 .5v12M8.500 .5v12M.5 4.500h12M.5 8.500h12" />
      </svg>
    </ViewButton>
    <ViewButton>
      <svg width="13" height="13" viewBox="0 0 13 13" fill="none" stroke="#705f70">
        <path d="M.5.5h12v12H.5zM3 3.500h7v6H3zM4.500 5.500h4M4.500 7.500h4" />
      </svg>
    </ViewButton>
    <ViewButton>
      <svg width="14" height="13" viewBox="0 0 14 13" fill="none" stroke="#705f70">
        <path d="M.5.5h13v12H.5zM.5 8.500h6V.5M6.500 8.500h3V.5" />
      </svg>
    </ViewButton>
    <Slot $w={12} $ml={3}>
      <svg width="6" height="2" viewBox="0 0 6 2" fill="#606060"><path d="M0 0h6v2H0z" /></svg>
    </Slot>
    <ZoomSlider><i /></ZoomSlider>
    <Slot $w={10}>
      <svg width="8" height="8" viewBox="0 0 8 8" fill="#606060"><path d="M3 0h2v3h3v2H5v3H3V5H0V3h3z" /></svg>
    </Slot>
    <ZoomPct>100%</ZoomPct>
  </StatusBar>
);

const Page = styled.div`
  position: relative;
  width: 1920px;
  height: 1033px;
  overflow: hidden;
`;

export default function App() {
  return (
    <Page>
      <GlobalStyle />
      <Title />
      <RibbonBar />
      <FormulaBar />
      <Sheet />
      <Tabs />
      <Status />
      <Watermark>
        <WatermarkArabic>مستقل</WatermarkArabic>
        <WatermarkLatin>mostaql.com</WatermarkLatin>
      </Watermark>
    </Page>
  );
}
